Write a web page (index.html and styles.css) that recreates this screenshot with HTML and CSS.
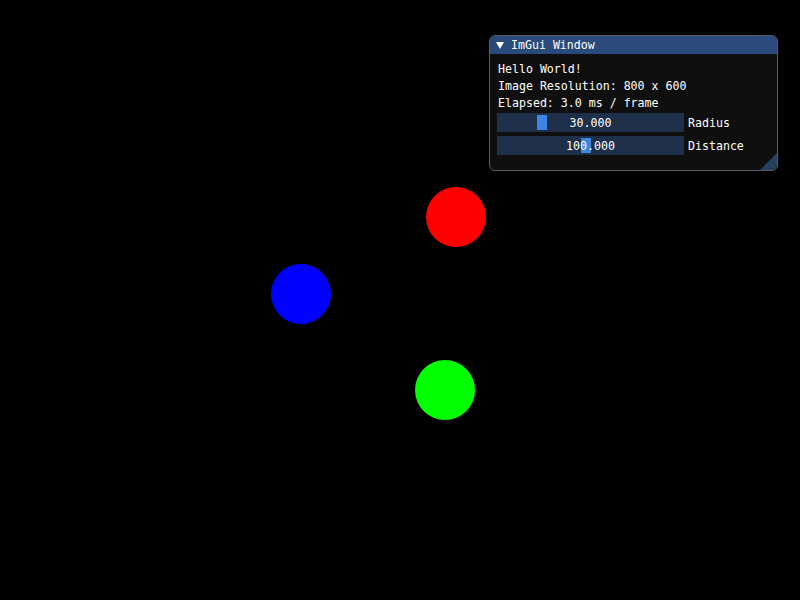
FILE: index.html
```html
<!DOCTYPE html>
<html>
<head>
<meta charset="utf-8">
<link rel="stylesheet" href="styles.css">
</head>
<body>
<div class="canvas">
  <div class="ball red"></div>
  <div class="ball blue"></div>
  <div class="ball green"></div>

  <div class="window">
    <div class="titlebar">
      <svg class="arrow" width="8" height="7" viewBox="0 0 8 7"><polygon points="0,0 8,0 4,7" fill="#ffffff"/></svg>
      <span>ImGui Window</span>
    </div>
    <div class="content">
      <div class="line">Hello World!</div>
      <div class="line">Image Resolution: 800 x 600</div>
      <div class="line">Elapsed: 3.0 ms / frame</div>
      <div class="row">
        <div class="slider">
          <div class="grab" style="left: 40px"></div>
          <span class="value">30.000</span>
        </div>
        <span class="label">Radius</span>
      </div>
      <div class="row">
        <div class="slider">
          <div class="grab" style="left: 84px"></div>
          <span class="value">100.000</span>
        </div>
        <span class="label">Distance</span>
      </div>
    </div>
    <div class="grip"></div>
  </div>
</div>
</body>
</html>
```
FILE: styles.css
```css
html, body {
  margin: 0;
  padding: 0;
  background: #000000;
}

.canvas {
  position: relative;
  width: 800px;
  height: 600px;
  overflow: hidden;
  background: #000000;
}

.ball {
  position: absolute;
  width: 60px;
  height: 60px;
  border-radius: 50%;
}

.red { left: 426px; top: 187px; background: #ff0000; }
.blue { left: 271px; top: 264px; background: #0000ff; }
.green { left: 415px; top: 360px; background: #00ff00; }

.window {
  position: absolute;
  left: 489px;
  top: 35px;
  width: 287px;
  height: 134px;
  border: 1px solid #5a5a66;
  border-radius: 6px;
  background: #0f0f0f;
  overflow: hidden;
  font-family: "DejaVu Sans Mono", "Liberation Mono", monospace;
  font-size: 11.6px;
  color: #ffffff;
}

.titlebar {
  height: 18px;
  background: #294a7a;
  display: flex;
  align-items: center;
  padding-left: 6px;
  gap: 7px;
  line-height: 13px;
}

.arrow {
  display: block;
}

.content {
  padding: 8px 0 0 7px;
  display: flex;
  flex-direction: column;
  gap: 4px;
}

.line {
  height: 12px;
  padding: 1px 0 0 1px;
  line-height: 13px;
  white-space: pre;
}

.row {
  display: flex;
  align-items: center;
  gap: 4px;
  height: 19px;
}

.slider {
  position: relative;
  width: 187px;
  height: 19px;
  background: #1d2f49;
  display: flex;
  align-items: center;
  justify-content: center;
}

.grab {
  position: absolute;
  top: 2px;
  width: 10px;
  height: 15px;
  background: #3d85e0;
}

.value {
  position: relative;
  top: 1px;
  line-height: 13px;
  white-space: pre;
}

.label {
  position: relative;
  top: 1px;
  line-height: 13px;
  white-space: pre;
}

.grip {
  position: absolute;
  right: 0;
  bottom: 0;
  width: 17px;
  height: 17px;
  background: #24405f;
  clip-path: polygon(100% 0, 100% 100%, 0 100%);
}
```
